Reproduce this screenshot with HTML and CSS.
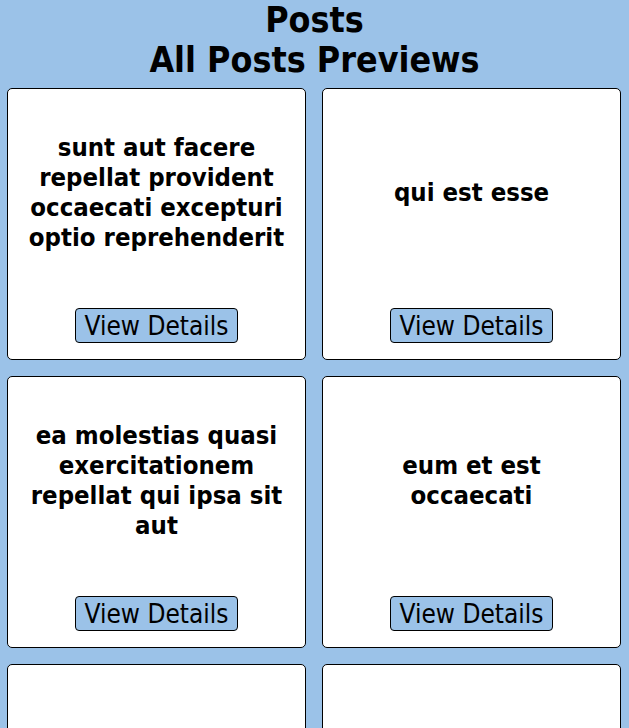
FILE: index.html
```html
<!DOCTYPE html>
<html>
<head>
    <title>Posts</title>
    <link rel="stylesheet" href="styles.css">
</head>
<body>
    <header class="page-header">
        <h1>Posts</h1>
        <h1>All Posts Previews</h1>
    </header>

    <main class="posts-grid">
        <div class="post-card">
            <h2 class="post-title">sunt aut facere repellat provident occaecati excepturi optio reprehenderit</h2>
            <button class="details-btn">View Details</button>
        </div>
        <div class="post-card">
            <h2 class="post-title">qui est esse</h2>
            <button class="details-btn">View Details</button>
        </div>
        <div class="post-card">
            <h2 class="post-title">ea molestias quasi exercitationem repellat qui ipsa sit aut</h2>
            <button class="details-btn">View Details</button>
        </div>
        <div class="post-card">
            <h2 class="post-title">eum et est occaecati</h2>
            <button class="details-btn">View Details</button>
        </div>
        <div class="post-card">
            <h2 class="post-title">nesciunt quas odio</h2>
            <button class="details-btn">View Details</button>
        </div>
        <div class="post-card">
            <h2 class="post-title">dolorem eum magni eos aperiam quia</h2>
            <button class="details-btn">View Details</button>
        </div>
    </main>
</body>
</html>
```

FILE: styles.css
```css
* {
    box-sizing: border-box;
}

body {
    font-family: "DejaVu Sans Condensed", "DejaVu Sans", sans-serif;
    margin: 0;
    background: #9bc2e8;
    color: #000;
}

.page-header {
    text-align: center;
}

.page-header h1 {
    margin: 0;
    font-size: 35.5px;
    line-height: 40px;
}

.posts-grid {
    display: grid;
    grid-template-columns: 1fr 1fr;
    gap: 16px;
    padding: 8px 8px 8px 7px;
}

.post-card {
    background: #fff;
    border: 1px solid #000;
    border-radius: 5px;
    height: 272px;
    padding: 0 16px 16px;
    display: flex;
    flex-direction: column;
    align-items: center;
}

.post-title {
    flex: 1;
    display: flex;
    align-items: center;
    justify-content: center;
    text-align: center;
    font-size: 25.5px;
    line-height: 30px;
    margin: 16px 0 30px;
}

.details-btn {
    font-family: "DejaVu Sans Condensed", "DejaVu Sans", sans-serif;
    font-size: 26px;
    background: #9bc2e8;
    color: #000;
    border: 1px solid #000;
    border-radius: 4px;
    padding: 0 9px;
    height: 35px;
}
```
